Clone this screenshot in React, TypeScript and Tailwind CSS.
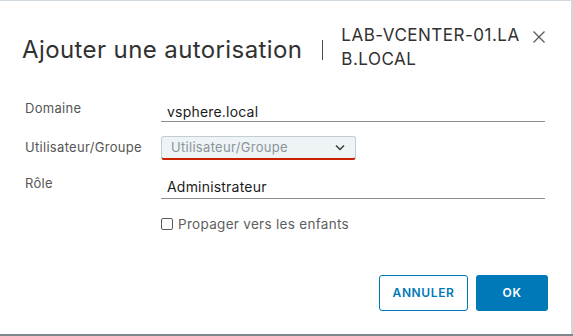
import React from "react";

export default function App() {
  const font = { fontFamily: "Inter, 'Noto Sans', sans-serif" };
  return (
    <div className="w-[573px] h-[336px] bg-[#cfd8dc] overflow-hidden flex flex-col" style={font}>
      <div className="flex flex-1 pt-px">
        <div className="w-[571px] h-[333px] bg-white flex flex-col">
          {/* Header */}
          <div className="flex items-start pt-[22px] pl-[22px]">
            <div className="mt-[11px] text-[24px] leading-[32px] text-[#313131] tracking-[0.4px] whitespace-nowrap">
              Ajouter une autorisation
            </div>
            <div className="ml-[20px] mt-[17px] w-px h-[20px] bg-[#4a4a4a]" />
            <div className="ml-[18px] w-[184px] text-[17px] leading-[24px] text-[#313131] tracking-[0.5px] break-all">
              LAB-VCENTER-01.LAB.LOCAL
            </div>
            <button className="ml-[6px] mt-[6px] w-[16px] h-[16px] flex items-center justify-center text-[#555]">
              <svg width="14" height="14" viewBox="0 0 14 14" fill="none" stroke="#5a5a5a" strokeWidth="1.3">
                <path d="M1.5 1.5 L12.5 12.5 M12.5 1.5 L1.5 12.5" />
              </svg>
            </button>
          </div>

          {/* Form */}
          <div className="mt-[26px] flex flex-col">
            <div className="flex items-end h-[25px]">
              <div className="w-[161px] pl-[25px] pb-[4px] text-[13px] tracking-[0.3px] text-[#565656]">Domaine</div>
              <div className="w-[384px] h-[25px] border-b border-[#8c8c8c] pl-[6px] pt-[4px] text-[14px] tracking-[0.2px] text-[#1b1b1b]">
                vsphere.local
              </div>
            </div>

            <div className="flex items-center mt-[14px] h-[24px]">
              <div className="w-[161px] pl-[25px] text-[13px] tracking-[0.3px] text-[#565656]">Utilisateur/Groupe</div>
              <div className="w-[195px] h-[24px] bg-[#eef3f6] border border-[#c3ced4] border-b-2 border-b-[#c92100] rounded-[3px] flex items-center justify-between pl-[9px] pr-[10px]">
                <span className="text-[13px] tracking-[0.3px] text-[#8c9399]">Utilisateur/Groupe</span>
                <svg width="10" height="7" viewBox="0 0 10 7" fill="none" stroke="#3a3a3a" strokeWidth="1.5">
                  <path d="M1 1.5 L5 5.5 L9 1.5" />
                </svg>
              </div>
            </div>

            <div className="flex items-end mt-[14px] h-[25px]">
              <div className="w-[161px] pl-[25px] pb-[6px] text-[13px] tracking-[0.3px] text-[#565656]">Rôle</div>
              <div className="w-[384px] h-[25px] border-b border-[#8c8c8c] pl-[6px] pt-[2px] text-[14px] tracking-[0.2px] text-[#1b1b1b]">
                Administrateur
              </div>
            </div>

            <div className="flex items-center mt-[15px] pl-[161px]">
              <div className="w-[12px] h-[12px] border border-[#5a5a5a] rounded-[2px] bg-white" />
              <span className="ml-[5px] text-[13.5px] tracking-[0.3px] text-[#5e5e5e]">Propager vers les enfants</span>
            </div>
          </div>

          {/* Footer */}
          <div className="mt-auto mb-[23px] flex justify-end gap-[8px] pr-[23px]">
            <button className="w-[89px] h-[36px] border border-[#0079b8] rounded-[3px] text-[#0079b8] text-[12px] font-semibold tracking-[0.6px]">
              ANNULER
            </button>
            <button className="w-[72px] h-[36px] bg-[#0079b8] rounded-[3px] text-white text-[12px] font-semibold tracking-[0.6px]">
              OK
            </button>
          </div>
        </div>
      </div>
      <div className="h-[2px] bg-[#7f888c]" />
    </div>
  );
}
